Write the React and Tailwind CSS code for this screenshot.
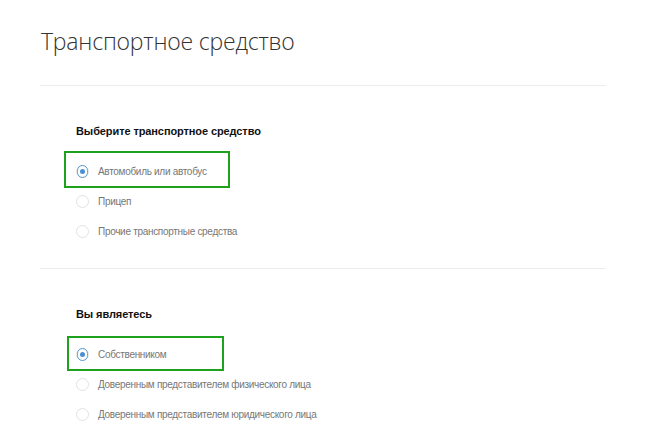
import React, { useState } from 'react';

const vehicleOptions = ['Автомобиль или автобус', 'Прицеп', 'Прочие транспортные средства'];
const ownerOptions = [
    'Собственником',
    'Доверенным представителем физического лица',
    'Доверенным представителем юридического лица',
];

const RadioGroup = ({ title, options, value, onChange, box }) => (
    <div className="pl-9 pt-[40px] pb-[22px]">
        <div className="text-[11px] font-bold text-[#111] leading-none h-[14px] tracking-[-0.1px]">{title}</div>
        <div className="mt-[16px] flex flex-col">
            {options.map((opt, i) => {
                const checked = value === i;
                return (
                    <div key={opt} className="relative flex items-center h-[30px]">
                        {checked && (
                            <div
                                className="absolute border-2 border-[#1ea21e]"
                                style={{ left: box.left, top: box.top, width: box.width, height: box.height }}
                            />
                        )}
                        <button
                            onClick={() => onChange(i)}
                            className="flex items-center gap-[9px] text-left"
                        >
                            <span className="w-[13px] h-[13px] rounded-full border border-[#e2e2e2] bg-white flex items-center justify-center">
                                {checked && (
                                    <span className="w-[13px] h-[13px] rounded-full border border-[#5b9fd6] flex items-center justify-center">
                                        <span className="w-[5px] h-[5px] rounded-full bg-[#4a90d0]" />
                                    </span>
                                )}
                            </span>
                            <span className="text-[10px] text-[#777] tracking-[-0.3px]">{opt}</span>
                        </button>
                    </div>
                );
            })}
        </div>
    </div>
);

const App = () => {
    const [vehicle, setVehicle] = useState(0);
    const [owner, setOwner] = useState(0);

    return (
        <div className="w-[645px] h-[445px] bg-white overflow-hidden" style={{ fontFamily: '"Liberation Sans", Arial, sans-serif' }}>
            <div className="pl-10 pr-[39px] pt-[26px]">
                <h1
                    className="text-[23px] font-light text-[#333] leading-[30px] pl-[1px] pb-[29px] border-b border-[#ececec] tracking-[-0.2px]"
                    style={{ fontFamily: '"Open Sans", sans-serif' }}
                >
                    Транспортное средство
                </h1>
                <div className="border-b border-[#ececec]">
                    <RadioGroup
                        title="Выберите транспортное средство"
                        options={vehicleOptions}
                        value={vehicle}
                        onChange={setVehicle}
                        box={{ left: -12, top: -5, width: 166, height: 37 }}
                    />
                </div>
                <RadioGroup
                    title="Вы являетесь"
                    options={ownerOptions}
                    value={owner}
                    onChange={setOwner}
                    box={{ left: -9, top: -3, width: 157, height: 35 }}
                />
            </div>
        </div>
    );
};

export default App;
